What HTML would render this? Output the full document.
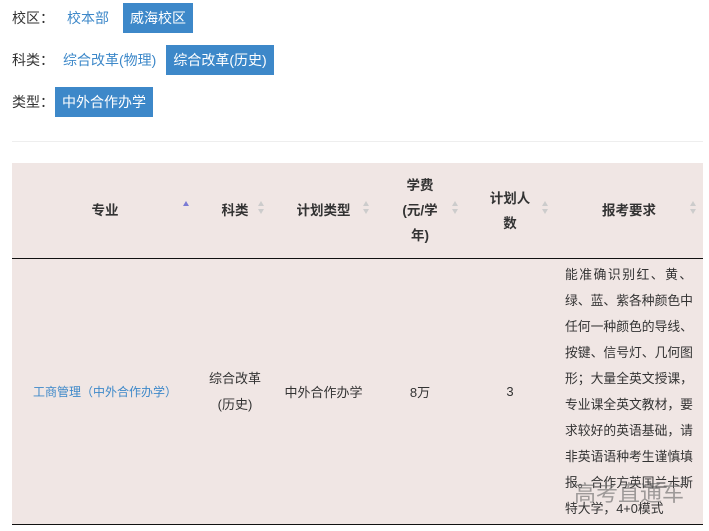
<!DOCTYPE html>
<html><head><meta charset="utf-8"><style>
body{margin:0;width:709px;height:531px;overflow:hidden;background:#fff;font-family:"Liberation Sans","Noto Sans CJK SC",sans-serif;font-size:13px;color:#333;position:relative}
.row{position:absolute;left:12px;height:30px;line-height:30px;white-space:nowrap;font-size:14px}
.row span{display:inline-block;vertical-align:top}
.lk{color:#3d88c9;padding:0 7px}
.on{background:#3d88c9;color:#fff;padding:0 7px}
.sep{position:absolute;left:12px;right:6px;top:141px;border-top:1px solid #eee}
table{position:absolute;left:12px;top:163px;width:691px;border-collapse:collapse;background:#f0e6e4}
th{font-weight:bold;height:95px;line-height:25px;border-bottom:1px solid #111;position:relative;padding:0;font-size:13.5px}
td{text-align:center;height:265px;border-bottom:1px solid #111;padding:0}
.ar{position:absolute;top:38px;width:0;height:0}
.ar:before{content:"";position:absolute;left:-3px;top:0;border:3px solid transparent;border-bottom:5px solid #ccc;border-top:0}
.ar:after{content:"";position:absolute;left:-3px;top:8px;border:3px solid transparent;border-top:5px solid #ccc;border-bottom:0}
.ar.up:before{border-bottom-color:#7b7bd4}.ar.up:after{display:none}
.req{text-align:left;line-height:26px;padding:0 0 0 10px;white-space:nowrap;font-size:12.8px}
.wm{position:absolute;left:574px;top:476px;font-size:22px;color:rgba(90,90,90,.55)}
</style></head><body>
<div class="row" style="top:3px"><span style="width:48px">校区：</span><span class="lk">校本部</span><span style="width:7px"></span><span class="on">威海校区</span></div>
<div class="row" style="top:45px"><span style="width:44px">科类：</span><span class="lk">综合改革(物理)</span><span style="width:3px"></span><span class="on">综合改革(历史)</span></div>
<div class="row" style="top:87px"><span style="width:43px">类型：</span><span class="on">中外合作办学</span></div>
<div class="sep"></div>
<table>
<tr>
<th style="width:186px">专业<i class="ar up" style="left:174px"></i></th>
<th style="width:74px">科类<i class="ar" style="left:63px"></i></th>
<th style="width:103px">计划类型<i class="ar" style="left:94px"></i></th>
<th style="width:90px">学费<br>(元/学<br>年)<i class="ar" style="left:80px"></i></th>
<th style="width:90px">计划人<br>数<i class="ar" style="left:80px"></i></th>
<th>报考要求<i class="ar" style="left:138px"></i></th>
</tr>
<tr>
<td style="color:#3d88c9;font-size:12px">工商管理（中外合作办学）</td>
<td style="line-height:26px">综合改革<br>(历史)</td>
<td>中外合作办学</td>
<td>8万</td>
<td>3</td>
<td class="req"><span style="letter-spacing:1.5px">能准确识别红、黄、</span><br>绿、蓝、紫各种颜色中<br>任何一种颜色的导线、<br>按键、信号灯、几何图<br>形；大量全英文授课，<br>专业课全英文教材，要<br>求较好的英语基础，请<br>非英语语种考生谨慎填<br>报。合作方英国兰卡斯<br>特大学，4+0模式</td>
</tr>
</table>
<div class="wm">高考直通车</div>
</body></html>
